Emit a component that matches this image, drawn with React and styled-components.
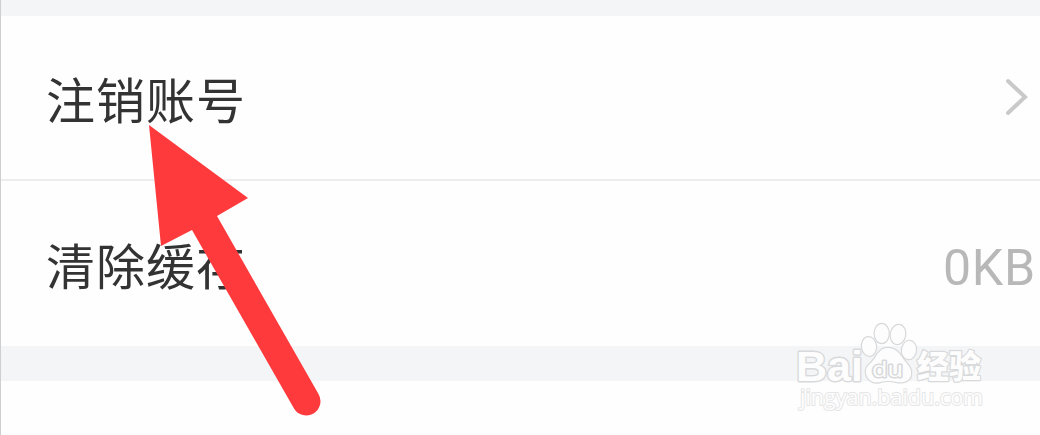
import styled, { createGlobalStyle } from "styled-components";

const GlobalStyle = createGlobalStyle`
  * {
    box-sizing: border-box;
  }

  body {
    margin: 0;
    background: #fefefe;
  }
`;

const Page = styled.main`
  position: relative;
  display: flex;
  flex-direction: column;
  height: 435px;
  overflow: hidden;
  border-left: 1px solid #cfcfd0;
  background: #fefefe;
  font-family: "Noto Sans CJK SC", sans-serif;
`;

const Gap = styled.div`
  flex: none;
  height: ${({ $height }) => $height}px;
  background: #f4f5f7;
`;

const Row = styled.div`
  display: flex;
  flex: none;
  align-items: center;
  justify-content: space-between;
  height: ${({ $height }) => $height}px;
  padding: 0 5px 0 45px;
`;

const Divider = styled.div`
  flex: none;
  height: 2px;
  background: #ededee;
`;

const Label = styled.span`
  color: #333;
  font-size: 49px;
  line-height: 70px;
  letter-spacing: 1px;
`;

const Value = styled.span`
  padding-top: 8px;
  margin-right: -1px;
  color: #b8b8b8;
  font-family: Roboto, sans-serif;
  font-size: 50px;
  line-height: 60px;
  letter-spacing: 0.8px;
`;

const Chevron = styled.svg`
  width: 24px;
  height: 38px;
  margin: 0 7px 2px 0;
`;

const Pointer = styled.svg`
  position: absolute;
  top: 120px;
  left: 139px;
  width: 190px;
  height: 300px;
`;

const Watermark = styled.svg`
  position: absolute;
  top: 315px;
  left: 789px;
  width: 210px;
  height: 105px;

  text,
  path,
  ellipse {
    fill: #fdfdfd;
    stroke: #d8d9db;
    stroke-width: 2.4px;
    stroke-linejoin: round;
    paint-order: stroke;
  }

  .brand {
    stroke-width: 2.8px;
    font-family: "Liberation Sans", sans-serif;
    font-weight: 700;
  }

  .inner {
    stroke-width: 2.8px;
    font-family: "Open Sans", sans-serif;
    font-weight: 400;
  }

  .site {
    stroke: #e6e6e7;
    stroke-width: 2px;
    font-family: "Open Sans", sans-serif;
  }

  .chinese {
    font-family: "Noto Sans CJK SC", sans-serif;
    font-weight: 900;
  }
`;

function BaiduMark() {
  return (
    <Watermark viewBox="790 315 210 105">
      <text className="brand" x="796" y="380.5" fontSize="42" textLength="67" lengthAdjust="spacingAndGlyphs">
        Bai
      </text>
      <ellipse cx="869" cy="346.5" rx="7" ry="9.3" transform="rotate(-8 869 346.5)" />
      <ellipse cx="881.7" cy="333.5" rx="7" ry="9.6" />
      <ellipse cx="898" cy="334.5" rx="7.2" ry="9.6" transform="rotate(10 898 334.5)" />
      <ellipse cx="909" cy="350" rx="7" ry="9.2" transform="rotate(8 909 350)" />
      <path d="M888 348C896 348 900 354 904 360C909 366 912 369 911 375C910 381 904 383 897 382C891 380.500 885 380.500 880 382C872 384 867 379 866 373C865 366 871 364 875 358C878 353 881 348 888 348Z" />
      <text className="inner" x="872" y="376.5" fontSize="21" textLength="31" lengthAdjust="spacingAndGlyphs">
        du
      </text>
      <text className="chinese" x="917" y="378" fontSize="32" textLength="64">
        经验
      </text>
      <text className="site" x="800" y="405" fontSize="21.5" textLength="183" lengthAdjust="spacingAndGlyphs">
        jingyan.baidu.com
      </text>
    </Watermark>
  );
}

export default function App() {
  return (
    <>
      <GlobalStyle />
      <Page>
        <Gap $height={16} />
        <Row $height={163}>
          <Label>注销账号</Label>
          <Chevron viewBox="0 0 24 38" fill="none" stroke="#c9c9c9" strokeWidth="4" strokeLinecap="round">
            <path d="M4 3L21 19L4 35" />
          </Chevron>
        </Row>
        <Divider />
        <Row $height={165}>
          <Label>清除缓存</Label>
          <Value>0KB</Value>
        </Row>
        <Gap $height={35} />
        <BaiduMark />
        <Pointer viewBox="140 120 190 300">
          <path
            d="M149 125L248 198L217 216L318.500 394A14 14 0 0 1 294 408.500L192 230L161 246Z"
            fill="#ff3a3d"
          />
        </Pointer>
      </Page>
    </>
  );
}
